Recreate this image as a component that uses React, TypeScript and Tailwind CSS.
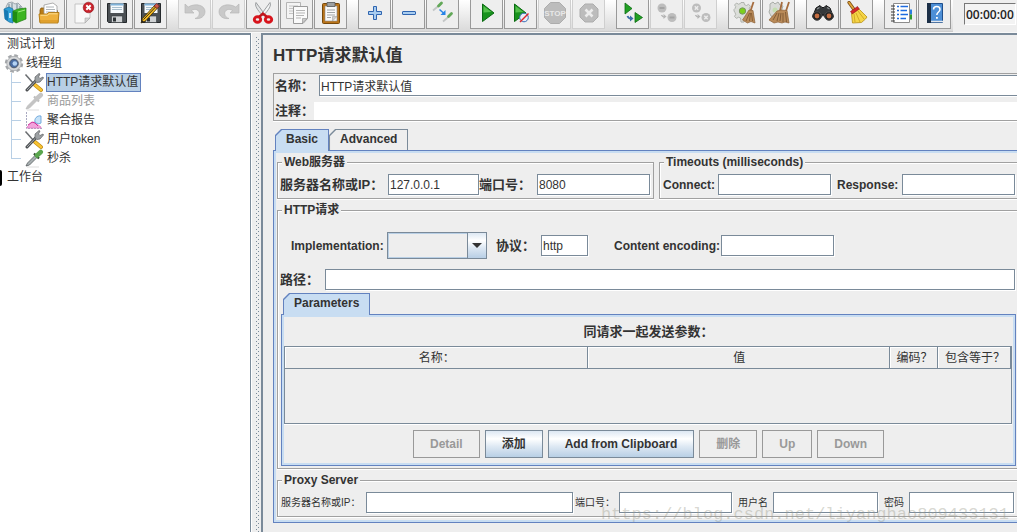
import React from "react";
import clsx from "clsx";

type IconProps = { children: React.ReactNode };

const Icon = ({ children }: IconProps) => (
  <svg viewBox="0 0 24 24" className="size-6 shrink-0" aria-hidden="true">
    {children}
  </svg>
);

const TreeIcon = ({ children }: IconProps) => (
  <svg viewBox="0 0 20 19" className="h-[19px] w-5 shrink-0" aria-hidden="true">
    {children}
  </svg>
);

/* ---------- toolbar icons ---------- */

const TemplatesIcon = () => (
  <Icon>
    <path d="M3 6l2-4 4-1 3 2 3-1 4 4v6H3z" fill="#d7dee2" stroke="#8b979e" strokeWidth=".8" />
    <path d="M6 3v7M9 2v7M14 3v5M17 5v4" stroke="#6f8590" />
    <path d="M1 8l5-2 4 2v14l-4-1-4-3z" fill="#2f9fd6" stroke="#1c6e9d" strokeWidth=".7" />
    <path d="M1 8l4 2v10l-3-2z" fill="#1779b3" />
    <path d="M6 12h2v5H6z" fill="#bfe7fa" />
    <path d="M10 10l5-2 8-1v11l-10 4-3-2z" fill="#3cb521" stroke="#1f7d11" strokeWidth=".7" />
    <path d="M10 10l4 1v11l-4-2z" fill="#1f8c12" />
    <path d="M15 11l7-2" stroke="#a1ed7f" />
  </Icon>
);

const OpenIcon = () => (
  <Icon>
    <path d="M3 9l1-2h5l1 2h10l1 3v9H3z" fill="#b97c16" stroke="#8a5a0d" strokeWidth=".8" />
    <path d="M7 4l9-2 4 3v9H7z" fill="#fff" stroke="#9a9a9a" strokeWidth=".8" />
    <path d="M9 6h8M9 8.500h9M9 11h9" stroke="#aeb4b8" />
    <path d="M2 13h8l1.500-1.500H22L21 22H3z" fill="#eeb13d" stroke="#b17913" strokeWidth=".9" />
    <path d="M3.500 14.300h7l1.500-1.500h8.500" stroke="#fbdc8d" fill="none" />
    <path d="M3 20h18" stroke="#d28f1e" />
  </Icon>
);

const CloseIcon = () => (
  <Icon>
    <path d="M4 3h15v14l-5 5H4z" fill="#f9f9f9" stroke="#b9b9b9" strokeWidth=".8" />
    <path d="M19 17h-5v5z" fill="#d5d5d5" stroke="#aaa" strokeWidth=".6" />
    <circle cx="17.500" cy="6.500" r="5.300" fill="#c9222b" stroke="#8f1017" strokeWidth=".6" />
    <path d="M15.300 4.300l4.400 4.400M19.700 4.300l-4.400 4.400" stroke="#fff" strokeWidth="2" />
  </Icon>
);

const Floppy = () => (
  <>
    <path d="M2.500 2.500h19v19h-18l-1-1z" fill="#4b5054" stroke="#24282b" />
    <path d="M5.500 2.500h13v9.500h-13z" fill="#f5f9fc" />
    <path d="M5.500 2.500h13v2h-13z" fill="#7fb2d9" />
    <path d="M7 6.500h10M7 8.500h10" stroke="#a8bfce" />
    <path d="M6.500 15h11v6.500h-11z" fill="#cfd2d4" stroke="#33383b" strokeWidth=".6" />
    <path d="M8 16.500h3v4H8z" fill="#2d3235" />
  </>
);

const SaveIcon = () => (
  <Icon>
    <Floppy />
  </Icon>
);

const SaveAsIcon = () => (
  <Icon>
    <Floppy />
    <path d="M2 22l1.500-4.500L16 4l3 2.500L6.500 20z" fill="#f2b824" stroke="#3b2b05" strokeWidth=".8" />
    <path d="M4.500 18.500L17.500 5" stroke="#3a300f" strokeWidth="1" />
    <path d="M15 5l2.500-2.500 3 2.500-2.300 2.500z" fill="#c8584a" stroke="#611" strokeWidth=".6" />
    <path d="M2 22l1-3 2 2z" fill="#222" />
  </Icon>
);

const UndoIcon = () => (
  <Icon>
    <path
      d="M2 3v9h9L8.300 9.500c4-2.500 8.200-.5 8 3.200-.1 2.200-1.600 4-4.300 4.800 5.500.8 10-2 10-7C22 4.500 13 1.500 5.200 6z"
      fill="#c9c9c9"
      stroke="#b7b7b7"
      strokeWidth=".7"
    />
  </Icon>
);

const RedoIcon = () => (
  <Icon>
    <path
      d="M22 3v9h-9l2.700-2.500c-4-2.500-8.200-.5-8 3.200.1 2.200 1.600 4 4.300 4.800-5.500.8-10-2-10-7C2 4.500 11 1.500 18.800 6z"
      fill="#c9c9c9"
      stroke="#b7b7b7"
      strokeWidth=".7"
    />
  </Icon>
);

const CutIcon = () => (
  <Icon>
    <path d="M5 1.500c-1.500 3 1 7 6.500 13l2-1.500z" fill="#e3e5e6" stroke="#85898b" strokeWidth=".8" />
    <path d="M19 1.500c1.500 3-1 7-6.500 13l-2-1.500z" fill="#f4f5f5" stroke="#85898b" strokeWidth=".8" />
    <ellipse cx="6.500" cy="18.500" rx="3.200" ry="2.800" fill="none" stroke="#d8141c" strokeWidth="2.900" />
    <ellipse cx="17.500" cy="18.500" rx="3.200" ry="2.800" fill="none" stroke="#d8141c" strokeWidth="2.900" />
    <path d="M8 16l4-3.500 4 3.500" fill="none" stroke="#c2141b" strokeWidth="2.400" />
  </Icon>
);

const CopyIcon = () => (
  <Icon>
    <path d="M1.500 1.500h14v16h-14z" fill="#f4f4f4" stroke="#b5b5b5" />
    <path d="M4 5h9M4 7.500h9M4 10h5M4 12.500h4" stroke="#c4c4c4" />
    <path d="M8.500 5.500h14v12l-4.500 5H8.500z" fill="#fafafa" stroke="#9b9b9b" />
    <path d="M11 9.500h9M11 12h9M11 14.500h8M11 17h5" stroke="#b5b5b5" />
    <path d="M22 17.500h-4.500v4.500z" fill="#ccc" stroke="#999" strokeWidth=".7" />
  </Icon>
);

const PasteIcon = () => (
  <Icon>
    <rect x="3.500" y="2.500" width="17" height="20" rx="1" fill="#b9741a" stroke="#77490c" />
    <path d="M6 5h12v15H6z" fill="#fafafa" stroke="#8e8e8e" strokeWidth=".6" />
    <path d="M8 1.500h8v4H8z" fill="#9da0a2" stroke="#55585a" strokeWidth=".8" />
    <path d="M8 9h8M8 11.500h8M8 14h8M8 16.500h4" stroke="#a2a6a8" />
    <path d="M18 15.500h-4.500V20z" fill="#cfcfcf" stroke="#999" strokeWidth=".5" />
  </Icon>
);

const PlusIcon = () => (
  <Icon>
    <path
      d="M10.500 5.500h3v5h5v3h-5v5h-3v-5h-5v-3h5z"
      fill="#a9cdf0"
      stroke="#2f65b0"
      strokeLinejoin="round"
    />
  </Icon>
);

const MinusIcon = () => (
  <Icon>
    <rect x="5.500" y="10.500" width="13" height="3" rx=".5" fill="#a9cdf0" stroke="#2f65b0" />
  </Icon>
);

const ToggleIcon = () => (
  <Icon>
    <path d="M2 9.500l6-5" stroke="#c3c6c6" strokeWidth="1.800" />
    <path d="M7.500 5l3-3" stroke="#62a858" strokeWidth="2.800" strokeLinecap="round" />
    <path d="M12 20.500l6-5" stroke="#c3c6c6" strokeWidth="1.800" />
    <path d="M17.500 15.500l3-3" stroke="#62a858" strokeWidth="2.800" strokeLinecap="round" />
    <path d="M8.500 8.500l4 3.500" stroke="#2583e8" strokeWidth="1.500" />
    <path d="M14.500 9v5h-5z" fill="#2583e8" />
  </Icon>
);

const StartIcon = () => (
  <Icon>
    <path d="M7.500 3v17.500L19 12z" fill="#18921d" stroke="#0b6b12" />
    <path d="M8.500 5v6.500l8-.5z" fill="#55c04c" />
  </Icon>
);

const StartNoTimersIcon = () => (
  <Icon>
    <path d="M5.500 3v17.500L17 12z" fill="#18921d" stroke="#0b6b12" />
    <path d="M6.500 5v6.500l8-.5z" fill="#55c04c" />
    <circle cx="15" cy="16.500" r="4.300" fill="#e6eef7" stroke="#3a6fb7" />
    <path d="M11 21l8.500-8.500" stroke="#e0262b" strokeWidth="1.500" />
  </Icon>
);

const StopIcon = () => (
  <Icon>
    <path d="M7.500 1.500h9l6 6v9l-6 6h-9l-6-6v-9z" fill="#bcbcbc" stroke="#adadad" />
    <text
      x="12"
      y="15"
      textAnchor="middle"
      fontFamily="Liberation Sans, sans-serif"
      fontSize="8"
      fontWeight="700"
      fill="#e8e8e8"
    >
      STOP
    </text>
  </Icon>
);

const ShutdownIcon = () => (
  <Icon>
    <path d="M8 3h8l5 5v8l-5 5H8l-5-5V8z" fill="#bcbcbc" stroke="#adadad" />
    <path d="M8.500 8.500l7 7M15.500 8.500l-7 7" stroke="#ececec" strokeWidth="2.600" />
  </Icon>
);

const RemoteStartIcon = () => (
  <Icon>
    <path d="M4 2v11l7-5.500z" fill="#20a022" stroke="#0b6b12" strokeWidth=".8" />
    <path d="M14 11.500v10l7.500-5z" fill="#20a022" stroke="#0b6b12" strokeWidth=".8" />
    <path d="M6.500 15q1 2.500 3 2.500" fill="none" stroke="#3c6da8" strokeWidth="2" />
    <path d="M9 14.500v6l3.500-3z" fill="#3c6da8" />
  </Icon>
);

const RemoteStopIcon = () => (
  <Icon>
    <circle cx="7" cy="7" r="4.500" fill="#bdbdbd" />
    <circle cx="17" cy="16.500" r="4.500" fill="#bdbdbd" />
    <path d="M4.500 7h5M14.500 16.500h5" stroke="#a3a3a3" strokeWidth="2" />
    <path d="M6.500 14q1 2 3 2" fill="none" stroke="#b5b5b5" strokeWidth="1.500" />
    <path d="M8.500 13v5l3-2.500z" fill="#b5b5b5" />
  </Icon>
);

const RemoteShutdownIcon = () => (
  <Icon>
    <circle cx="7.500" cy="7" r="4.500" fill="#bdbdbd" />
    <circle cx="17" cy="16.500" r="4.500" fill="#bdbdbd" />
    <path
      d="M5.800 5.300l3.400 3.400M9.200 5.300L5.800 8.700M15.300 14.800l3.400 3.400M18.700 14.800l-3.400 3.400"
      stroke="#ececec"
      strokeWidth="1.500"
    />
    <path d="M6.500 14q1 2 3 2" fill="none" stroke="#b5b5b5" strokeWidth="1.500" />
    <path d="M8.500 13v5l3-2.500z" fill="#b5b5b5" />
  </Icon>
);

const ClearIcon = () => (
  <Icon>
    <path
      d="M8 1.500h3l.5 2.200 2 .8 2-1.200 2 2-1.200 2 .8 2 2.200.5v3l-2.200.5-.8 2 1.200 2-2 2-2-1.200-2 .8-.5 2.200H8L7.500 17l-2-.8-2 1.200-2-2 1.200-2-.8-2L1 10V8.500L2 7.500l.7-2L1.500 4l2-2 2 1.200 2-.8z"
      fill="#dcdeda"
      stroke="#a3a7a2"
      strokeWidth=".8"
    />
    <circle cx="9.500" cy="10" r="3.200" fill="#7cd01c" stroke="#7a9468" />
    <path d="M20.500 1l-3 9" stroke="#a56b3d" strokeWidth="1.800" />
    <path d="M16 9l4 .5L22 22l-4-1.500-3.500 1.500-5-3z" fill="#b98a58" stroke="#8d6238" strokeWidth=".7" />
    <path d="M16.500 12l-3.500 8M17.500 12l-1 8M18.500 12l1 8" stroke="#7b532c" strokeWidth=".8" />
  </Icon>
);

const ClearAllIcon = () => (
  <Icon>
    <path d="M3 3l3-2 2 2 3-2 2 3 3 1-2 6 1 4-5 3-6-3-2-4 1-3z" fill="#d9dbd8" stroke="#a9ada8" />
    <circle cx="8" cy="9" r="2.500" fill="#c4ddb0" />
    <path d="M15 1l-2 9M22 1l-3 9" stroke="#a56b3d" strokeWidth="1.800" />
    <path d="M10 10l4-1 6 .5L22 22l-4-1-3 1-4-1-4 1-5-3z" fill="#b98a58" stroke="#8d6238" strokeWidth=".7" />
    <path d="M10 12l-4 7M12 12l-2 8M14 12l-1 8M16 12v9M18.500 11l1 10" stroke="#73502e" strokeWidth=".8" />
  </Icon>
);

const SearchIcon = () => (
  <Icon>
    <path d="M5 7l4-2.500 2 2h2l2-2L19 7l3.500 9h-9L12 13l-1.500 3h-9z" fill="#35383a" stroke="#141516" />
    <path d="M6 8l2.500-1.500M16 6.500L18.500 8" stroke="#8f9496" strokeWidth="1.200" />
    <circle cx="6" cy="15" r="4.300" fill="#222" stroke="#4b4b4b" />
    <circle cx="18" cy="15" r="4.300" fill="#222" stroke="#4b4b4b" />
    <circle cx="6" cy="15" r="2.400" fill="#c56e42" />
    <circle cx="18" cy="15" r="2.400" fill="#c56e42" />
  </Icon>
);

const BroomIcon = () => (
  <Icon>
    <path d="M4 1.500l5 7" stroke="#7d4d13" strokeWidth="3.200" strokeLinecap="round" />
    <path d="M4 1.500l5 7" stroke="#e1a83b" strokeWidth="1.600" strokeLinecap="round" />
    <path d="M6.500 12.500l7-5 8.500 8.500-1.500 2-4 3.500-9 .5z" fill="#f5d547" stroke="#b88f14" strokeWidth=".8" />
    <path d="M5.500 10.500l7-5 1.800 2.500-7 5z" fill="#d5282b" stroke="#8f1417" strokeWidth=".6" />
    <path d="M9 13l1 8M11 12l4 9M13 10l6 8" stroke="#cda521" strokeWidth=".9" />
  </Icon>
);

const FunctionHelperIcon = () => (
  <Icon>
    <path d="M20 8.500h3v5h-3z" fill="#2b7ee0" />
    <path d="M20 13.500h3v5h-3z" fill="#2f9a2f" />
    <path d="M4.500 2.500h16v19h-16z" fill="#fff" stroke="#8c8c8c" />
    <path d="M8 5.500h2M8 9.500h2M8 13.500h2M8 17.500h2" stroke="#1e6be0" strokeWidth="1.300" />
    <path d="M11.500 5.500H19M11.500 9.500H18M11.500 13.500H19M11.500 17.500H17" stroke="#1e6be0" strokeWidth="1.300" />
    <path d="M2 5h4M2 8h4M2 11h4M2 14h4M2 17h4M2 20h4" stroke="#3a3a3a" strokeWidth="1.200" />
  </Icon>
);

const HelpIcon = () => (
  <Icon>
    <path d="M4.500 2.500h15v19h-15z" fill="#4d8fd6" stroke="#1f4f8c" />
    <path d="M4 2h4v20H4z" fill="#1c2f47" />
    <path d="M8 20.500h12" stroke="#e3e8ee" strokeWidth="1.500" />
    <path d="M10.500 8.500c0-4 6.500-4 6.500 0 0 2.500-3.200 2.500-3.200 5.500" fill="none" stroke="#fff" strokeWidth="1.500" />
    <path d="M13 16h1.800v1.800H13z" fill="#fff" />
  </Icon>
);

type Tool = { label: string; icon: React.FC; disabled?: boolean };

const toolGroups: Tool[][] = [
  [
    { label: "Templates", icon: TemplatesIcon },
    { label: "Open", icon: OpenIcon },
    { label: "Close", icon: CloseIcon },
    { label: "Save", icon: SaveIcon },
    { label: "Save as", icon: SaveAsIcon },
  ],
  [
    { label: "Undo", icon: UndoIcon, disabled: true },
    { label: "Redo", icon: RedoIcon, disabled: true },
    { label: "Cut", icon: CutIcon },
    { label: "Copy", icon: CopyIcon },
    { label: "Paste", icon: PasteIcon },
  ],
  [
    { label: "Expand all", icon: PlusIcon },
    { label: "Collapse all", icon: MinusIcon },
    { label: "Toggle", icon: ToggleIcon },
  ],
  [
    { label: "Start", icon: StartIcon },
    { label: "Start no pauses", icon: StartNoTimersIcon },
    { label: "Stop", icon: StopIcon, disabled: true },
    { label: "Shutdown", icon: ShutdownIcon, disabled: true },
  ],
  [
    { label: "Remote start all", icon: RemoteStartIcon },
    { label: "Remote stop all", icon: RemoteStopIcon, disabled: true },
    { label: "Remote shutdown all", icon: RemoteShutdownIcon, disabled: true },
  ],
  [
    { label: "Clear", icon: ClearIcon },
    { label: "Clear all", icon: ClearAllIcon },
  ],
  [
    { label: "Search", icon: SearchIcon },
    { label: "Reset search", icon: BroomIcon },
  ],
  [
    { label: "Function helper", icon: FunctionHelperIcon },
    { label: "Help", icon: HelpIcon },
  ],
];

const Toolbar = () => (
  <header className="flex h-[33px] items-start overflow-hidden border-b border-[#f8f8f8] bg-[#eeeeee]">
    <div className="-ml-0.5 flex h-8 shrink-0 gap-[11px] border-b border-[#cccccc] bg-linear-to-b from-white to-[#dadada] pr-0.5">
      {toolGroups.map((group, i) => (
        <div key={i} className="flex gap-px">
          {group.map(({ label, icon: ToolIcon, disabled }) => (
            <button
              key={label}
              aria-label={label}
              disabled={disabled}
              className={clsx(
                "flex h-[29px] w-[33px] items-start justify-center border border-t-0 bg-[#eeeeee] pt-px",
                disabled ? "border-[#cfcfcf]" : "border-[#999999]"
              )}
            >
              <ToolIcon />
            </button>
          ))}
        </div>
      ))}
    </div>
    <input
      readOnly
      aria-label="Elapsed time"
      value="00:00:00"
      className="mt-[3px] ml-[11px] h-[22px] w-[52px] shrink-0 border border-t-[#777777] border-r-white border-b-white border-l-[#777777] bg-[#f3f3f3] px-px font-['Open_Sans',sans-serif] text-xs font-semibold text-[#222222]"
    />
  </header>
);

/* ---------- tree ---------- */

const GearIcon = () => (
  <TreeIcon>
    <circle cx="10" cy="9.500" r="8" fill="none" stroke="#a4a7aa" strokeWidth="2.400" strokeDasharray="3.700 2.580" />
    <circle cx="10" cy="9.500" r="7.200" fill="#d4d6d8" stroke="#a4a7aa" strokeWidth=".8" />
    <circle cx="10" cy="9.500" r="4.300" fill="#4a6da3" stroke="#4f5a6a" />
    <circle cx="10.800" cy="9.500" r="2.300" fill="#b4d3f4" />
  </TreeIcon>
);

const ToolsIcon = () => (
  <TreeIcon>
    <path d="M1.500 1.500l8 9" stroke="#6a6d70" strokeWidth="1.500" />
    <path d="M11 12l6 5" stroke="#c08a10" strokeWidth="3.800" strokeLinecap="round" />
    <path d="M11 12l6 5" stroke="#f8c331" strokeWidth="2.400" strokeLinecap="round" />
    <path d="M3 17l10-10.500" stroke="#4e5154" strokeWidth="3" strokeLinecap="round" />
    <path d="M3 17l10-10.500" stroke="#a9adb0" strokeWidth="1" />
    <path
      d="M11 8V4l4-3.500 1 .5-1.500 3 1.500 1.500L19 4l.5 1-3.500 4-3 .5z"
      fill="#9da1a4"
      stroke="#5b5e61"
      strokeWidth=".7"
    />
  </TreeIcon>
);

const SamplerIcon = ({ disabled }: { disabled?: boolean }) => (
  <TreeIcon>
    <path d="M3 18h12" stroke="#dddddd" />
    <path
      d="M2 17l1.500-3 8-8 2 2-8 8z"
      fill={disabled ? "#c4c4c4" : "#a9b0b2"}
      stroke={disabled ? "#bdbdbd" : "#565c5e"}
      strokeWidth=".8"
    />
    <path d="M10 4.500l5 5" stroke={disabled ? "#bdbdbd" : "#2e4a2c"} strokeWidth="2.200" />
    <path d="M13 6.500L16.800 3" stroke={disabled ? "#c4c4c4" : "#5aa64e"} strokeWidth="4.500" strokeLinecap="round" />
  </TreeIcon>
);

const ReportIcon = () => (
  <TreeIcon>
    <path d="M2.500 1v16.500H18" fill="none" stroke="#a9a9c0" strokeDasharray="2 1" />
    <path d="M3 16l4-4 3-1 3 2 4 3v1H3z" fill="#f2a3dc" stroke="#e07fc4" strokeWidth=".8" />
    <path d="M17 5c-4-1-7 3-6 6 2 2 5 2 6 1z" fill="#c6e2f8" stroke="#5b9bd6" strokeWidth=".8" />
    <path d="M4 14l4-3 3 1 3 3" fill="none" stroke="#d0359c" />
  </TreeIcon>
);

const children = [
  { label: "HTTP请求默认值", icon: <ToolsIcon />, selected: true },
  { label: "商品列表", icon: <SamplerIcon disabled />, disabled: true },
  { label: "聚合报告", icon: <ReportIcon /> },
  { label: "用户token", icon: <ToolsIcon /> },
  { label: "秒杀", icon: <SamplerIcon /> },
];

const TestPlanTree = () => (
  <nav className="w-[251px] shrink-0 overflow-hidden border-t-2 border-r border-[#7a8a99] bg-white text-xs leading-[19px]">
    <ul>
      <li className="pl-[7px]">测试计划</li>
      <li>
        <div className="flex pl-1">
          <GearIcon />
          <span className="pl-0.5">线程组</span>
        </div>
        <ul className="pl-[11px]">
          {children.map((item, i) => (
            <li key={item.label} className="flex h-[19px] items-center">
              <span className="flex h-full w-2.5 flex-col">
                <span className="h-[10px] border-b border-l border-[#b8cfe5]" />
                {i < children.length - 1 && (
                  <span className="flex-1 border-l border-[#b8cfe5]" />
                )}
              </span>
              <span className="w-[25px] pl-[3px]">{item.icon}</span>
              <span
                className={clsx(
                  "h-[19px] border leading-[17px]",
                  item.selected
                    ? "border-[#6382bf] bg-[#b8cfe5] pr-0.5"
                    : "border-transparent",
                  item.disabled && "text-[#999999]"
                )}
              >
                {item.label}
              </span>
            </li>
          ))}
        </ul>
      </li>
      <li className="flex items-center">
        <span className="mr-[5px] h-4 w-0.5 rounded-r-sm bg-black" />
        工作台
      </li>
    </ul>
  </nav>
);

// grip texture of the split pane divider
const Divider = () => (
  <div className="w-2.5 shrink-0 overflow-hidden border-l border-white pt-1 pl-1">
    <svg className="h-full w-[3px]" aria-hidden="true">
      <defs>
        <pattern id="grip" width="4" height="4" patternUnits="userSpaceOnUse">
          <rect width="1" height="1" fill="#7a8a99" />
          <rect x="2" y="2" width="1" height="1" fill="#7a8a99" />
        </pattern>
      </defs>
      <rect width="100%" height="100%" fill="url(#grip)" />
    </svg>
  </div>
);

/* ---------- form pieces ---------- */

const Field = ({
  className,
  ...props
}: React.InputHTMLAttributes<HTMLInputElement>) => (
  <input
    className={clsx(
      "h-[21px] min-w-0 border border-[#7a8a99] bg-white px-px text-xs text-[#333333] shadow-[1px_1px_0_#ffffff]",
      className
    )}
    {...props}
  />
);

const Group = ({
  title,
  className,
  children,
}: {
  title: string;
  className?: string;
  children: React.ReactNode;
}) => (
  <fieldset
    className={clsx(
      "min-w-0 border border-[#a0a0a0] shadow-[inset_1px_1px_0_#ffffff,0_1px_0_#ffffff]",
      className
    )}
  >
    <legend className="ml-1 bg-[#eeeeee] px-0.5 text-xs leading-[14px] font-bold">
      {title}
    </legend>
    {children}
  </fieldset>
);

const Tab = ({ label, selected }: { label: string; selected?: boolean }) => (
  <button
    role="tab"
    aria-selected={!!selected}
    className={clsx(
      "px-px pt-px text-xs font-bold [clip-path:polygon(6px_0,100%_0,100%_100%,0_100%,0_6px)]",
      selected ? "z-10 h-[22px] bg-[#6382bf]" : "h-[21px] bg-[#7a8a99]"
    )}
  >
    <span
      className={clsx(
        "block h-full px-2.5 leading-[19px] [clip-path:polygon(6px_0,100%_0,100%_100%,0_100%,0_6px)]",
        selected ? "bg-[#c8ddf2]" : "bg-[#eeeeee]"
      )}
    >
      {label}
    </span>
  </button>
);

const ActionButton = ({
  disabled,
  children,
}: {
  disabled?: boolean;
  children: React.ReactNode;
}) => (
  <button
    disabled={disabled}
    className={clsx(
      "h-7 border px-4 text-xs font-bold",
      disabled
        ? "border-[#999999] text-[#999999]"
        : "border-[#7a8a99] bg-[linear-gradient(#dde8f3,#ffffff_30%,#dde8f3_60%,#b8cfe5)]"
    )}
  >
    {children}
  </button>
);

const NameBox = () => (
  <div className="border border-r-0 border-[#a0a0a0] pt-px pl-px text-[13px] shadow-[0_1px_0_#ffffff]">
    <div className="flex items-center">
      <label htmlFor="name" className="w-11 font-bold">
        名称：
      </label>
      <Field id="name" defaultValue="HTTP请求默认值" className="flex-1 border-r-0" />
    </div>
    <div className="mt-1.5 flex h-[18px] items-center">
      <label htmlFor="comments" className="w-[39px] font-bold">
        注释：
      </label>
      <input id="comments" className="h-full min-w-0 flex-1 bg-white px-px text-xs" />
    </div>
  </div>
);

const ServerRow = () => (
  <div className="grid grid-cols-[377fr_358fr] gap-[5px]">
    <Group title="Web服务器">
      <div className="flex items-center pt-[5px] pr-[3px] pb-[3px] pl-0.5">
        <label htmlFor="server" className="w-[108px] shrink-0 text-[13px] font-bold">
          服务器名称或IP：
        </label>
        <Field id="server" defaultValue="127.0.0.1" className="w-[91px]" />
        <label htmlFor="port" className="w-[58px] shrink-0 text-[13px] font-bold">
          端口号：
        </label>
        <Field id="port" defaultValue="8080" className="flex-1" />
      </div>
    </Group>
    <Group title="Timeouts (milliseconds)" className="border-r-0">
      <div className="flex items-center pt-[5px] pr-0.5 pb-[3px] pl-[3px] text-xs font-bold">
        <label htmlFor="connect" className="w-[55px] shrink-0">
          Connect:
        </label>
        <Field id="connect" className="flex-1" />
        <label htmlFor="response" className="ml-1.5 w-[65px] shrink-0">
          Response:
        </label>
        <Field id="response" className="flex-1" />
      </div>
    </Group>
  </div>
);

const ParameterTable = () => (
  <div className="mr-px h-[78px] border border-[#7a8a99] shadow-[0_1px_0_#ffffff]">
    <table className="w-full table-fixed border-separate border-spacing-0 text-xs">
      <colgroup>
        <col />
        <col />
        <col className="w-12" />
        <col className="w-[73px]" />
      </colgroup>
      <thead>
        <tr>
          {["名称：", "值", "编码？", "包含等于？"].map((h) => (
            <th
              key={h}
              className="h-[22px] overflow-hidden border-r border-b border-[#7a8a99] p-0 pl-0.5 font-normal whitespace-nowrap shadow-[inset_1px_1px_0_#ffffff]"
            >
              {h}
            </th>
          ))}
        </tr>
      </thead>
      <tbody />
    </table>
  </div>
);

const Parameters = () => (
  <div className="mt-[3px] mr-px ml-[3px]">
    <div role="tablist" className="-mb-px flex pl-0.5">
      <Tab label="Parameters" selected />
    </div>
    <div className="border border-[#6382bf]">
      <div className="border-2 border-[#c8ddf2] pb-[5px]">
        <div className="flex h-[29px] items-center justify-center text-[13px] font-bold">
          同请求一起发送参数：
        </div>
        <ParameterTable />
        <div className="mt-1.5 flex justify-center gap-[5px]">
          <ActionButton disabled>Detail</ActionButton>
          <ActionButton>添加</ActionButton>
          <ActionButton>Add from Clipboard</ActionButton>
          <ActionButton disabled>删除</ActionButton>
          <ActionButton disabled>Up</ActionButton>
          <ActionButton disabled>Down</ActionButton>
        </div>
      </div>
    </div>
  </div>
);

const HttpRequest = () => (
  <Group title="HTTP请求" className="mt-1 border-r-0 pb-0.5">
    <div className="flex items-center pt-[15px] pl-[13px] text-xs font-bold">
      <label htmlFor="impl" className="w-24 shrink-0">
        Implementation:
      </label>
      <div className="relative h-[27px] w-[100px] shrink-0">
        <select
          id="impl"
          className="size-full appearance-none border border-[#7a8a99] bg-[#eeeeee] px-1 shadow-[inset_0_0_0_1px_#b8cfe5]"
        >
          <option></option>
        </select>
        <span className="pointer-events-none absolute inset-y-px right-px flex w-[19px] items-center justify-center border-l border-[#7a8a99] bg-[linear-gradient(#dde8f3,#ffffff_30%,#dde8f3_60%,#b8cfe5)]">
          <svg viewBox="0 0 10 5" className="h-[5px] w-2.5" aria-hidden="true">
            <path d="M0 0h10L5 5z" fill="#333333" />
          </svg>
        </span>
      </div>
      <label htmlFor="protocol" className="ml-[9px] w-[45px] shrink-0 text-[13px]">
        协议：
      </label>
      <Field id="protocol" defaultValue="http" className="w-[47px] font-normal" />
      <label htmlFor="encoding" className="ml-[26px] w-[107px] shrink-0">
        Content encoding:
      </label>
      <Field id="encoding" className="w-[113px]" />
    </div>
    <div className="mt-2.5 flex items-center pr-0.5 pl-0.5">
      <label htmlFor="path" className="w-[45px] shrink-0 text-[13px] font-bold">
        路径：
      </label>
      <Field id="path" className="flex-1" />
    </div>
    <Parameters />
  </Group>
);

const ProxyServer = () => (
  <Group title="Proxy Server" className="mt-1 border-r-0">
    <div className="flex items-center pt-[5px] pr-[3px] pb-[3px] pl-[3px] text-[10px] leading-3">
      <label htmlFor="proxy-host" className="w-[85px] shrink-0">
        服务器名称或IP：
      </label>
      <Field id="proxy-host" className="flex-1" />
      <label htmlFor="proxy-port" className="w-[46px] shrink-0 pl-0.5">
        端口号：
      </label>
      <Field id="proxy-port" className="w-[113px]" />
      <label htmlFor="proxy-user" className="w-[41px] shrink-0 pl-1.5">
        用户名
      </label>
      <Field id="proxy-user" className="w-[105px]" />
      <label htmlFor="proxy-pass" className="w-[31px] shrink-0 pl-1.5">
        密码
      </label>
      <Field id="proxy-pass" type="password" className="w-[105px]" />
    </div>
  </Group>
);

const App = () => {
  return (
    <div className="relative flex min-h-screen flex-col overflow-hidden bg-[#eeeeee] font-['Liberation_Sans','Noto_Sans_CJK_SC',sans-serif] text-[#333333]">
      <Toolbar />
      <div className="flex flex-1">
        <TestPlanTree />
        <Divider />
        <main className="min-w-0 flex-1 border-t-2 border-l-2 border-[#7a8a99] pt-1 pb-2.5 pl-2.5">
          <h1 className="flex h-[34px] items-center text-[17px] font-bold">
            HTTP请求默认值
          </h1>
          <NameBox />
          <div role="tablist" className="mt-2 -mb-px flex pl-0.5">
            <Tab label="Basic" selected />
            <Tab label="Advanced" />
          </div>
          <div className="border border-r-0 border-[#6382bf]">
            <div className="border-2 border-r-0 border-[#c8ddf2] pt-0.5 pb-[3px] pl-px">
              <ServerRow />
              <HttpRequest />
              <ProxyServer />
            </div>
          </div>
        </main>
      </div>
      <span className="pointer-events-none absolute right-2 bottom-2 font-['Liberation_Mono',monospace] text-[17px] leading-5 text-[#9a9a8a]/40">
        https://blog.csdn.net/liyanghao809433131
      </span>
    </div>
  );
};

export default App;
